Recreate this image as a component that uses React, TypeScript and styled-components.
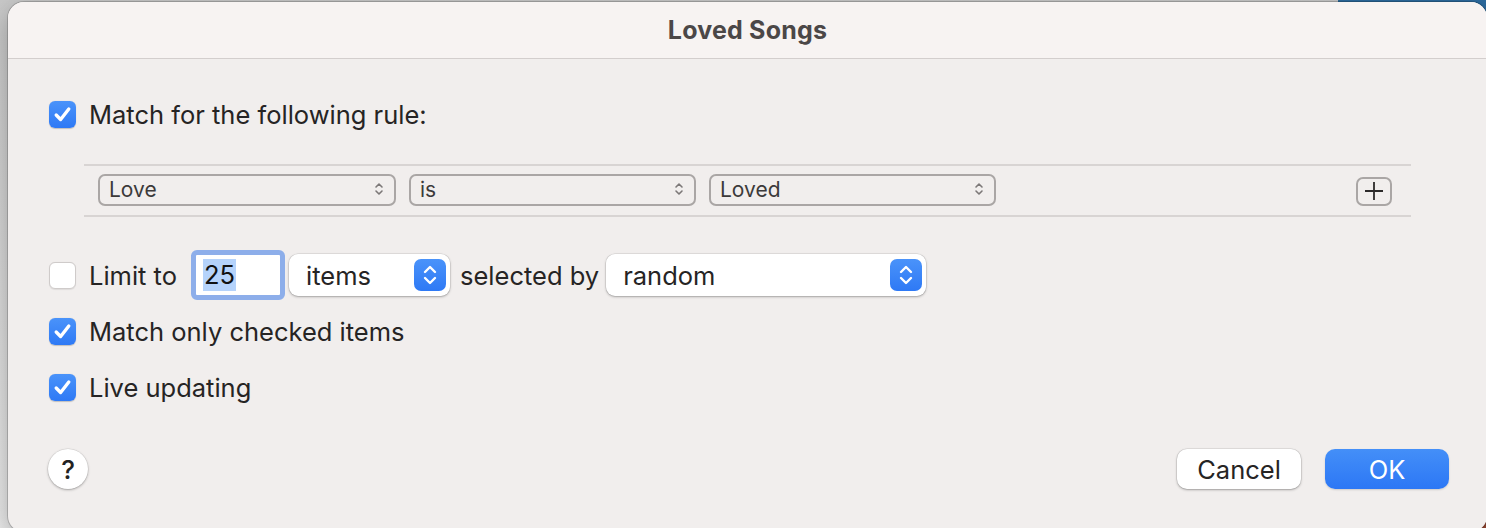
import React from 'react';
import styled, { createGlobalStyle } from 'styled-components';

const GlobalStyle = createGlobalStyle`
  html, body {
    margin: 0;
    padding: 0;
  }
  body {
    width: 1486px;
    height: 528px;
    overflow: hidden;
    background-color: #dcdcdc;
    background-image:
      linear-gradient(#2d6b9f, #2d6b9f),
      linear-gradient(#9b4a33, #9b4a33),
      linear-gradient(to bottom, #c9c9c9, #ececec);
    background-size: 148px 40px, 40px 40px, 100% 100%;
    background-position: right top, right bottom, left top;
    background-repeat: no-repeat;
    font-family: Inter, 'Noto Sans', 'Liberation Sans', sans-serif;
    -webkit-font-smoothing: antialiased;
  }
`;

const Backdrop = styled.div`
  padding: 2px 0 0 8px;
  height: 528px;
  box-sizing: border-box;
`;

const Dialog = styled.div`
  width: 1479px;
  height: 530px;
  border-radius: 16px;
  background: #f1eeed;
  overflow: hidden;
  box-shadow: 0 0 0 1px rgba(0, 0, 0, 0.18), 0 8px 28px rgba(0, 0, 0, 0.3);
  display: flex;
  flex-direction: column;
`;

const TitleBar = styled.div`
  height: 56px;
  flex: none;
  background: #f7f3f2;
  border-bottom: 1px solid #d3cecd;
  display: flex;
  align-items: center;
  justify-content: center;
`;

const Title = styled.h1`
  margin: 0;
  font-size: 25px;
  font-weight: 700;
  color: #4b4747;
  letter-spacing: 0.2px;
`;

const Body = styled.div`
  padding: 42px 38px 0 41px;
  display: flex;
  flex-direction: column;
`;

const CheckRow = styled.div<{ $h?: number }>`
  display: flex;
  align-items: center;
  gap: 13px;
  height: ${({ $h }) => $h || 56}px;
`;

const Box = styled.span<{ $on: boolean }>`
  flex: none;
  width: 27px;
  height: 27px;
  border-radius: 6px;
  box-sizing: border-box;
  display: flex;
  align-items: center;
  justify-content: center;
  ${({ $on }) =>
    $on
      ? `background: linear-gradient(#4a93fa, #2e79f5); box-shadow: 0 0.5px 1px rgba(0,0,0,.2);`
      : `background: #fff; border: 1px solid #cfcbca; box-shadow: 0 0.5px 1px rgba(0,0,0,.08);`}
`;

const Label = styled.span`
  font-size: 25.5px;
  color: #262424;
  white-space: nowrap;
`;

const RuleBox = styled.div`
  margin: 36px 0 0 35px;
  width: 1327px;
  height: 53px;
  box-sizing: border-box;
  border-top: 2px solid #d8d4d3;
  border-bottom: 2px solid #d8d4d3;
  display: flex;
  align-items: center;
  padding: 0 19px 2px 14px;
  gap: 13px;
`;

const RulePopup = styled.div<{ $w: number }>`
  flex: none;
  width: ${({ $w }) => $w}px;
  height: 32px;
  box-sizing: border-box;
  border: 2px solid #aaa6a5;
  border-radius: 7px;
  display: flex;
  align-items: center;
  justify-content: space-between;
  padding: 0 10px 1px 9px;
  font-size: 21px;
  color: #3c3a3a;
`;

const PlusButton = styled.div`
  margin-left: auto;
  width: 36px;
  height: 29px;
  box-sizing: border-box;
  border: 2px solid #aaa6a5;
  border-radius: 7px;
  display: flex;
  align-items: center;
  justify-content: center;
  margin-top: 3px;
`;

const LimitRow = styled(CheckRow)`
  margin-top: 30px;
`;

const FieldRing = styled.div`
  margin-left: 1px;
  width: 94px;
  height: 50px;
  box-sizing: border-box;
  border: 5px solid #8daeea;
  border-radius: 6px;
  background: #fff;
  display: flex;
  align-items: center;
  padding-left: 7px;
`;

const Selected = styled.span`
  background: #b5d3fb;
  font-size: 25.5px;
  color: #111;
  line-height: 32px;
  padding: 0 1px;
`;

const Popup = styled.div<{ $w: number }>`
  width: ${({ $w }) => $w}px;
  height: 42px;
  box-sizing: border-box;
  background: #fff;
  border-radius: 9px;
  box-shadow: 0 0 0 0.5px rgba(0, 0, 0, 0.12), 0 1px 2.5px rgba(0, 0, 0, 0.28);
  display: flex;
  align-items: center;
  justify-content: space-between;
  padding: 0 4px 0 17px;
  font-size: 25.5px;
  color: #262424;
`;

const Stepper = styled.span`
  width: 32px;
  height: 32px;
  border-radius: 7px;
  background: linear-gradient(#4a93fa, #2e79f5);
  display: flex;
  align-items: center;
  justify-content: center;
`;

const Footer = styled.div`
  margin-top: 34px;
  padding: 0 38px 0 40px;
  display: flex;
  align-items: center;
  gap: 24px;
`;

const HelpButton = styled.div`
  width: 40px;
  height: 40px;
  border-radius: 50%;
  background: #fff;
  box-shadow: 0 0 0 0.5px rgba(0, 0, 0, 0.1), 0 1px 2.5px rgba(0, 0, 0, 0.3);
  display: flex;
  align-items: center;
  justify-content: center;
  font-size: 26px;
  font-weight: 500;
  color: #222;
  margin-right: auto;
`;

const Button = styled.div<{ $primary?: boolean }>`
  width: 124px;
  height: 40px;
  border-radius: 10px;
  display: flex;
  align-items: center;
  justify-content: center;
  font-size: 25.5px;
  ${({ $primary }) =>
    $primary
      ? `background: linear-gradient(#448ff8, #2c77f5); color: #fff; box-shadow: 0 1px 2px rgba(0,0,0,.15);`
      : `background: #fff; color: #262424; box-shadow: 0 0 0 0.5px rgba(0,0,0,.12), 0 1px 2.5px rgba(0,0,0,.3);`}
`;

const Check = () => (
  <svg width="21" height="21" viewBox="0 0 20 20">
    <path d="M4 10.5 L8.2 14.8 L16 4.8" fill="none" stroke="#fff" strokeWidth="3.2" strokeLinecap="round" strokeLinejoin="round" />
  </svg>
);

const SmallChevrons = () => (
  <svg width="10" height="18" viewBox="0 0 10 18">
    <path d="M2 7 L5 4 L8 7 M2 11 L5 14 L8 11" fill="none" stroke="#7c7878" strokeWidth="1.6" strokeLinecap="round" strokeLinejoin="round" />
  </svg>
);

const StepChevrons = () => (
  <svg width="18" height="26" viewBox="0 0 18 26">
    <path d="M4 10 L9 5 L14 10 M4 16 L9 21 L14 16" fill="none" stroke="#fff" strokeWidth="2.4" strokeLinecap="round" strokeLinejoin="round" />
  </svg>
);

const Plus = () => (
  <svg width="20" height="20" viewBox="0 0 20 20">
    <path d="M10 1 V19 M1 10 H19" stroke="#2c2a2a" strokeWidth="1.8" />
  </svg>
);

const CheckBox = ({ on }: { on: boolean }) => <Box $on={on}>{on && <Check />}</Box>;

const rules = [
  { label: 'Love', width: 298 },
  { label: 'is', width: 287 },
  { label: 'Loved', width: 287 },
];

const App = () => (
  <>
    <GlobalStyle />
    <Backdrop>
      <Dialog>
        <TitleBar>
          <Title>Loved Songs</Title>
        </TitleBar>
        <Body>
          <CheckRow $h={27}>
            <CheckBox on />
            <Label>Match for the following rule:</Label>
          </CheckRow>
          <RuleBox>
            {rules.map((r) => (
              <RulePopup key={r.label} $w={r.width}>
                <span>{r.label}</span>
                <SmallChevrons />
              </RulePopup>
            ))}
            <PlusButton>
              <Plus />
            </PlusButton>
          </RuleBox>
          <LimitRow>
            <CheckBox on={false} />
            <Label>Limit to</Label>
            <FieldRing>
              <Selected>25</Selected>
            </FieldRing>
            <Popup $w={161} style={{ marginLeft: -9 }}>
              <span>items</span>
              <Stepper>
                <StepChevrons />
              </Stepper>
            </Popup>
            <Label style={{ marginLeft: -3 }}>selected by</Label>
            <Popup $w={320} style={{ marginLeft: -6 }}>
              <span>random</span>
              <Stepper>
                <StepChevrons />
              </Stepper>
            </Popup>
          </LimitRow>
          <CheckRow>
            <CheckBox on />
            <Label>Match only checked items</Label>
          </CheckRow>
          <CheckRow>
            <CheckBox on />
            <Label>Live updating</Label>
          </CheckRow>
        </Body>
        <Footer>
          <HelpButton>?</HelpButton>
          <Button>Cancel</Button>
          <Button $primary>OK</Button>
        </Footer>
      </Dialog>
    </Backdrop>
  </>
);

export default App;
